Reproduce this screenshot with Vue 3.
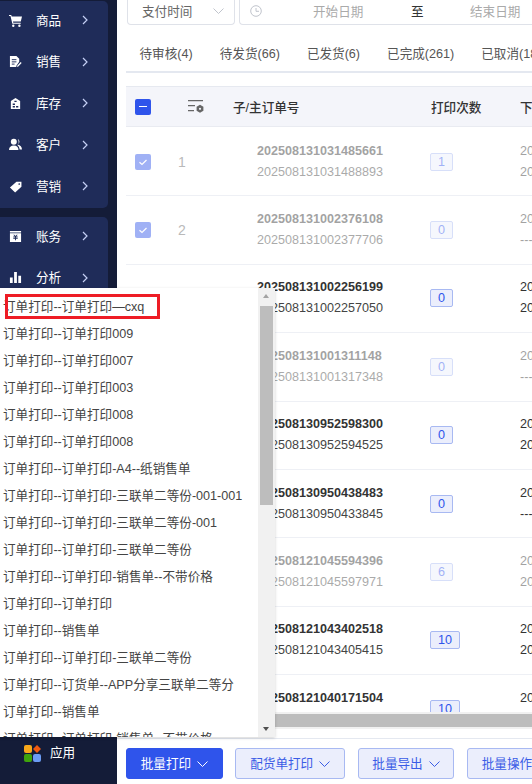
<script setup>
const menuA = [
  { label: '商品', icon: 'cart' },
  { label: '销售', icon: 'doc' },
  { label: '库存', icon: 'house' },
  { label: '客户', icon: 'users' },
  { label: '营销', icon: 'tag' }
]
const menuB = [
  { label: '账务', icon: 'bill' },
  { label: '分析', icon: 'bars' }
]
const tabs = ['待审核(4)', '待发货(66)', '已发货(6)', '已完成(261)', '已取消(18)']
const rows = [
  { n: 1, a: '202508131031485661', b: '202508131031488893', c: 1, d: '2025-08-13', e: '2025-08-13', off: true, on: true },
  { n: 2, a: '202508131002376108', b: '202508131002377706', c: 0, d: '2025-08-13', e: '---', off: true, on: true },
  { n: 3, a: '202508131002256199', b: '202508131002257050', c: 0, d: '2025-08-13', e: '2025-08-13' },
  { n: 4, a: '202508131001311148', b: '202508131001317348', c: 0, d: '2025-08-13', e: '---', off: true },
  { n: 5, a: '202508130952598300', b: '202508130952594525', c: 0, d: '2025-08-13', e: '2025-08-13' },
  { n: 6, a: '202508130950438483', b: '202508130950433845', c: 0, d: '2025-08-13', e: '---' },
  { n: 7, a: '202508121045594396', b: '202508121045597971', c: 6, d: '2025-08-12', e: '2025-08-12', off: true },
  { n: 8, a: '202508121043402518', b: '202508121043405415', c: 10, d: '2025-08-12', e: '2025-08-12' },
  { n: 9, a: '202508121040171504', b: '202508121040171888', c: 10, d: '2025-08-12', e: '2025-08-12' }
]
const items = [
  '订单打印--订单打印—cxq',
  '订单打印--订单打印009',
  '订单打印--订单打印007',
  '订单打印--订单打印003',
  '订单打印--订单打印008',
  '订单打印--订单打印008',
  '订单打印--订单打印-A4--纸销售单',
  '订单打印--订单打印-三联单二等份-001-001',
  '订单打印--订单打印-三联单二等份-001',
  '订单打印--订单打印-三联单二等份',
  '订单打印--订单打印-销售单--不带价格',
  '订单打印--订单打印',
  '订单打印--销售单',
  '订单打印--订单打印-三联单二等份',
  '订单打印--订货单--APP分享三联单二等分',
  '订单打印--销售单',
  '订单打印--订单打印-销售单--不带价格'
]
const buttons = [
  { label: '批量打印', primary: true },
  { label: '配货单打印' },
  { label: '批量导出' },
  { label: '批量操作' }
]
</script>

<template>
  <div class="page">
    <aside class="side">
      <div class="card">
        <div v-for="m in menuA" :key="m.label" class="mi">
          <svg class="mi-ic" viewBox="0 0 14 14" fill="#fff">
            <template v-if="m.icon === 'cart'">
              <path d="M0 1h2.400l.5 1.600H14l-1.300 5.600H4.300l.3 1.200h8v1.200H3.600L1.600 2.200H0z" />
              <circle cx="4.600" cy="12.600" r="1.300" /><circle cx="11.200" cy="12.600" r="1.300" />
            </template>
            <template v-else-if="m.icon === 'doc'">
              <path d="M1 1h7l3 3v3.400L8 11.500l-.2 1.500H1z" />
              <path d="M3 5h5M3 7.400h5M3 9.800h3" stroke="#1f2c59" stroke-width="1" />
              <path d="M8.600 13l.4-1.600 3.600-3.800 1 1-3.600 3.800z" />
            </template>
            <template v-else-if="m.icon === 'house'">
              <path fill-rule="evenodd" d="M7 1l5 3.400V13H2V4.400zM4 7v1.600h2.400V7zm3.600 2.600v1.800h2.400V9.600zM4 9.600v1.800h2.400V9.600zM5.800 4v1.400h2.400V4z" />
            </template>
            <template v-else-if="m.icon === 'users'">
              <circle cx="5.200" cy="4" r="3.200" /><path d="M0 13c0-3.400 2-5 5.200-5s5 1.600 5 5z" />
              <path d="M9.400 1.200a3.200 3.200 0 0 1 0 5.800c2.800.6 4.600 2.400 4.600 5.400h-2.600c0-2-1-3.600-2.400-4.800 1-.8 1.400-1.800 1.400-3 0-1.400-.4-2.400-1-3.400z" />
            </template>
            <template v-else-if="m.icon === 'tag'">
              <path fill-rule="evenodd" d="M8 2h5.400v5.200L6.600 13.400 1 8.200zm3 1.400a.9.900 0 1 0 0 1.800.9.900 0 0 0 0-1.800z" />
            </template>
          </svg>
          <span class="mi-t">{{ m.label }}</span>
          <svg class="mi-ch" viewBox="0 0 6 10" fill="none" stroke="#c5d0f5" stroke-width="1.200"><path d="M1 1l4 4-4 4" /></svg>
        </div>
      </div>
      <div class="card card2">
        <div v-for="m in menuB" :key="m.label" class="mi">
          <svg class="mi-ic" viewBox="0 0 14 14" fill="#fff">
            <template v-if="m.icon === 'bill'">
              <path fill-rule="evenodd" d="M1 1h12v1.600H1zM1 3.600h12V13H1zm3.600 1.400L6.400 7H4.600v1h1.900v.8H4.600v1h1.900V11h1V9.800h1.900v-1H7.500V8h1.900V7H7.600l1.800-2H8.200L7 6.400 5.800 5z" />
            </template>
            <template v-else>
              <path d="M1 7h3v6H1zM5.500 1h3v12h-3zM10 5h3v8h-3z" />
            </template>
          </svg>
          <span class="mi-t">{{ m.label }}</span>
          <svg class="mi-ch" viewBox="0 0 6 10" fill="none" stroke="#c5d0f5" stroke-width="1.200"><path d="M1 1l4 4-4 4" /></svg>
        </div>
      </div>
      <div class="apps">
        <svg class="apps-ic" viewBox="0 0 17 17">
          <rect x="0" y="0" width="8" height="8" rx="2" fill="#f9a81a" />
          <path d="M13 0l4 4-4 4-4-4z" fill="#f25a0f" />
          <rect x="0" y="9" width="8" height="8" rx="2" fill="#3fa40c" />
          <rect x="9" y="9" width="8" height="8" rx="2" fill="#6b9cf5" />
        </svg>
        <span class="apps-t">应用</span>
      </div>
    </aside>

    <main class="main">
      <div class="filters">
        <div class="select">
          <span>支付时间</span>
          <svg class="sel-ch" viewBox="0 0 11 6" fill="none" stroke="#c0c4cc" stroke-width="1"><path d="M.5.500l5 5 5-5" /></svg>
        </div>
        <div class="range">
          <svg class="clock" viewBox="0 0 12 12" fill="none" stroke="#c0c4cc" stroke-width="1"><circle cx="6" cy="6" r="5.300" /><path d="M6 3v3.300h3" /></svg>
          <span class="r1">开始日期</span>
          <span class="r2">至</span>
          <span class="r3">结束日期</span>
        </div>
      </div>

      <div class="tabs">
        <span v-for="t in tabs" :key="t" class="tab">{{ t }}</span>
      </div>

      <div class="table">
        <div class="tr head">
          <div><span class="cb cb-minus"><i></i></span></div>
          <div>
            <svg class="set" viewBox="0 0 16 13" fill="none" stroke="#666" stroke-width="1.200">
              <path d="M0 .6h15M0 5.600h7M0 10.600h6" />
              <path d="M12 4.800l3.400 2v4l-3.400 2-3.400-2v-4z" fill="#666" stroke="none" />
              <circle cx="12" cy="8.800" r="1.100" fill="#f4f5fa" stroke="none" />
            </svg>
          </div>
          <div class="th">子/主订单号</div>
          <div class="th">打印次数</div>
          <div class="th">下单时间</div>
        </div>
        <div v-for="r in rows" :key="r.n" class="row-wrap">
          <div class="tr" :class="{ off: r.off }">
            <div>
              <span v-if="r.on" class="cb cb-check">
                <svg viewBox="0 0 16 16" fill="none" stroke="#fff" stroke-width="1.200"><path d="M4.500 8.200l2.500 2.300 4.500-4.500" /></svg>
              </span>
              <span v-else class="cb cb-empty"></span>
            </div>
            <div class="num">{{ r.n }}</div>
            <div class="ord"><b>{{ r.a }}</b><span>{{ r.b }}</span></div>
            <div><span class="badge">{{ r.c }}</span></div>
            <div class="date"><span>{{ r.d }}</span><span>{{ r.e }}</span></div>
          </div>
        </div>
      </div>

      <div class="hbar"><div class="hthumb"></div></div>

      <div class="foot">
        <button v-for="b in buttons" :key="b.label" class="btn" :class="{ primary: b.primary }">
          {{ b.label }}
          <svg viewBox="0 0 11 6" fill="none" stroke="currentColor" stroke-width="1"><path d="M.5.500l5 5 5-5" /></svg>
        </button>
      </div>
    </main>

    <div class="popup">
      <div class="list">
        <div v-for="(t, i) in items" :key="i" class="item">{{ t }}</div>
      </div>
      <div class="vbar">
        <i class="up"></i>
        <div class="vthumb"></div>
        <i class="down"></i>
      </div>
      <div class="mark"></div>
    </div>
  </div>
</template>

<style>
html, body { margin: 0; background: #fff; }
</style>

<style scoped>
.page {
  position: relative;
  display: flex;
  width: 532px;
  height: 784px;
  overflow: hidden;
  font: 12.6px "Liberation Sans", "Noto Sans CJK SC", sans-serif;
  color: #333;
  background: #fff;
}
.side {
  flex: 0 0 117px;
  display: flex;
  flex-direction: column;
  background: #141c38;
}
.card {
  width: 108px;
  height: 207px;
  margin-top: 1px;
  background: #1f2c59;
  border-radius: 0 5px 5px 0;
}
.card2 { height: 100px; margin-top: 9px; }
.mi {
  display: flex;
  align-items: center;
  height: 41.500px;
  padding: 0 0 5.500px 9px;
  box-sizing: border-box;
  color: #fff;
}
.mi-ic { width: 13px; height: 13px; flex: none; margin-top: 2px; }
.mi-t { margin-left: 14px; width: 46px; }
.mi-ch { width: 6px; height: 10px; margin-top: 2px; }
.apps {
  display: flex;
  align-items: center;
  margin-top: auto;
  height: 46px;
  padding: 0 0 16px 24px;
  box-sizing: border-box;
  color: #fff;
}
.apps-ic { width: 17px; height: 17px; margin-right: 9px; }
.apps-t { padding-bottom: 4px; }

.main {
  flex: 1;
  min-width: 0;
  display: flex;
  flex-direction: column;
  padding-left: 9px;
}
.filters { display: flex; height: 25px; padding-left: 1px; gap: 4px; flex: none; }
.select {
  display: flex;
  align-items: center;
  box-sizing: border-box;
  width: 108px;
  height: 25px;
  padding: 0 10px 3px 14px;
  justify-content: space-between;
  border: 1px solid #dfe2e9;
  border-top: 0;
  border-radius: 0 0 4px 4px;
  color: #666;
}
.sel-ch { width: 11px; height: 6px; }
.range {
  flex: 1;
  position: relative;
  display: flex;
  align-items: center;
  box-sizing: border-box;
  height: 25px;
  padding: 0 0 3px 10px;
  border: 1px solid #dfe2e9;
  border-top: 0;
  border-right: 0;
  border-radius: 0 0 0 4px;
  color: #aaa;
}
.clock { width: 12px; height: 12px; margin-right: 51px; flex: none; }
.r1 { width: 98px; flex: none; }
.r2 { width: 59px; flex: none; color: #333; }
.r3 { flex: none; }

.tabs {
  flex: none;
  display: flex;
  align-items: center;
  padding-top: 9px;
  height: 37px;
  white-space: nowrap;
  border-bottom: 2px solid #e4e8f0;
  color: #555;
  overflow: hidden;
}
.tab { padding: 0 13.500px; flex: none; }

.table {
  flex: 1;
  min-height: 0;
  overflow: hidden;
  margin-top: 13px;
}
.tr {
  display: grid;
  grid-template-columns: 53px 54px 198px 89px 1fr;
  align-items: center;
  height: 100%;
  white-space: nowrap;
}
.head {
  box-sizing: border-box;
  height: 41px;
  margin-bottom: 1px;
  background: #f4f5fa;
  border-top: 1px solid #e6e9f0;
  border-bottom: 1px solid #e9ebf1;
  font-weight: 500;
}
.th { color: #333; }
.tr > div:first-child { padding-left: 9px; display: flex; }
.row-wrap {
  box-sizing: border-box;
  height: 68.400px;
  border-bottom: 1px solid #eef0f5;
}
.off { opacity: .45; }
.cb {
  display: flex;
  align-items: center;
  justify-content: center;
  width: 16px;
  height: 16px;
  border-radius: 2px;
  box-sizing: border-box;
}
.cb-minus { background: #2f54eb; }
.cb-minus i { width: 8px; height: 1.500px; background: #fff; }
.cb-check { background: #2f54eb; }
.cb-check svg { width: 16px; height: 16px; }
.cb-empty { border: 1px solid #dcdfe6; }
.set { width: 16px; height: 13px; margin-left: 9px; display: block; }
.num { color: #666; font-size: 14px; margin-left: -1px; }
.ord { display: flex; flex-direction: column; padding-left: 24px; line-height: 21px; }
.ord b { color: #333; }
.ord span { color: #444; }
.badge {
  display: inline-block;
  box-sizing: border-box;
  min-width: 21.600px;
  height: 18px;
  margin-left: -1px;
  padding: 0 7px;
  line-height: 16px;
  text-align: center;
  border: 1px solid #a8b9f2;
  border-radius: 2px;
  background: #ebeefc;
  color: #2f54eb;
}
.date { display: flex; flex-direction: column; line-height: 21px; overflow: hidden; }

.hbar {
  flex: none;
  height: 17px;
  margin-left: -9px;
  background: #f1f1f1;
  display: flex;
  align-items: center;
}
.hthumb { width: 100%; height: 13px; background: #bdbdbd; }
.foot {
  flex: none;
  display: flex;
  gap: 12.600px;
  height: 46px;
  box-sizing: border-box;
  margin-top: 9px;
  margin-left: -9px;
  padding: 9px 0 0 9px;
  border-top: 1px solid #e4e8f0;
}
.btn {
  flex: none;
  display: flex;
  align-items: center;
  gap: 6px;
  height: 31px;
  padding: 0 13.750px 2px;
  font: inherit;
  color: #3a5ce6;
  background: #ebeefc;
  border: 1px solid #a8b9f2;
  border-radius: 3px;
  white-space: nowrap;
}
.btn svg { width: 11px; height: 6px; margin-top: 2px; }
.primary { color: #fff; background: #2f54eb; border-color: #2f54eb; }

.popup {
  position: absolute;
  left: 0;
  top: 288px;
  width: 275px;
  height: 449px;
  background: #fff;
  box-shadow: 0 1px 3px rgba(0, 0, 0, .18);
  overflow: hidden;
}
.list { padding-top: 6px; color: #444; }
.item { height: 27px; line-height: 27px; padding-left: 3px; white-space: nowrap; }
.vbar {
  position: absolute;
  top: 0;
  right: 0;
  bottom: 0;
  width: 17px;
  background: #f1f1f1;
}
.vthumb {
  position: absolute;
  left: 2px;
  top: 18px;
  width: 13px;
  height: 199px;
  background: #bdbdbd;
}
.up, .down {
  position: absolute;
  left: 5px;
  width: 0;
  height: 0;
  border: 3.500px solid transparent;
}
.up { top: 6px; border-bottom: 4px solid #a3a3a3; border-top: 0; }
.down { bottom: 6px; border-top: 4px solid #505050; border-bottom: 0; }
.mark {
  position: absolute;
  left: 5px;
  top: 6px;
  width: 155px;
  height: 25px;
  box-sizing: border-box;
  border: 3px solid #ee1c25;
}
</style>
